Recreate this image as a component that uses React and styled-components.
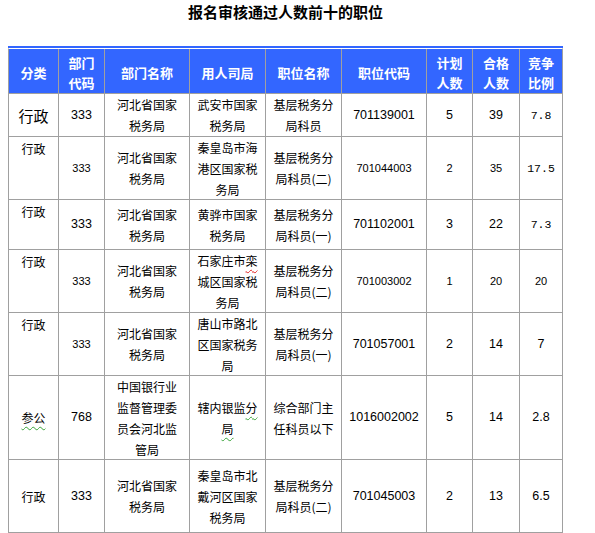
import React from "react";
import styled, { createGlobalStyle } from "styled-components";

const GlobalStyle = createGlobalStyle`
  body {
    margin: 0;
    background: #fff;
    font-family: "Noto Sans CJK SC", "Liberation Sans", sans-serif;
  }
`;

const headers = [
  ["分类"],
  ["部门", "代码"],
  ["部门名称"],
  ["用人司局"],
  ["职位名称"],
  ["职位代码"],
  ["计划", "人数"],
  ["合格", "人数"],
  ["竞争", "比例"],
];

const Wavy = styled.span`
  text-decoration: underline wavy ${(p) => p.$color};
  text-decoration-thickness: 1px;
  text-underline-offset: 3px;
`;

const TAX = ["河北省国家", "税务局"];

// each cell: [lines, kind, top]
const rows = [
  {
    h: 42,
    cells: [
      [["行政"], "cjkLg"],
      [["333"], "num"],
      [TAX, "cjk"],
      [["武安市国家", "税务局"], "cjk"],
      [["基层税务分", "局科员"], "cjk"],
      [["701139001"], "num"],
      [["5"], "num"],
      [["39"], "num"],
      [["7.8"], "mono"],
    ],
  },
  {
    h: 62,
    cells: [
      [["行政"], "cjk", true],
      [["333"], "sm"],
      [TAX, "cjk"],
      [["秦皇岛市海", "港区国家税", "务局"], "cjk"],
      [["基层税务分", "局科员(二)"], "cjk"],
      [["701044003"], "sm"],
      [["2"], "sm"],
      [["35"], "sm"],
      [["17.5"], "mono"],
    ],
  },
  {
    h: 49,
    cells: [
      [["行政"], "cjk", true],
      [["333"], "num"],
      [TAX, "cjk"],
      [["黄骅市国家", "税务局"], "cjk"],
      [["基层税务分", "局科员(一)"], "cjk"],
      [["701102001"], "num"],
      [["3"], "num"],
      [["22"], "num"],
      [["7.3"], "mono"],
    ],
  },
  {
    h: 62,
    cells: [
      [["行政"], "cjk", true],
      [["333"], "sm"],
      [TAX, "cjk"],
      [
        [
          <>
            石家庄市<Wavy $color="#e02020">栾</Wavy>
          </>,
          "城区国家税",
          "务局",
        ],
        "cjk",
      ],
      [["基层税务分", "局科员(二)"], "cjk"],
      [["701003002"], "sm"],
      [["1"], "sm"],
      [["20"], "sm"],
      [["20"], "sm"],
    ],
  },
  {
    h: 62,
    cells: [
      [["行政"], "cjk", true],
      [["333"], "sm"],
      [TAX, "cjk"],
      [["唐山市路北", "区国家税务", "局"], "cjk"],
      [["基层税务分", "局科员(一)"], "cjk"],
      [["701057001"], "num"],
      [["2"], "num"],
      [["14"], "num"],
      [["7"], "num"],
    ],
  },
  {
    h: 83,
    cells: [
      [[<Wavy $color="#3aa33a">参公</Wavy>], "cjk"],
      [["768"], "num"],
      [["中国银行业", "监督管理委", "员会河北监", "管局"], "cjk"],
      [
        [
          <>
            辖内银监<Wavy $color="#3aa33a">分</Wavy>
          </>,
          <Wavy $color="#3aa33a">局</Wavy>,
        ],
        "cjk",
      ],
      [["综合部门主", "任科员以下"], "cjk"],
      [["1016002002"], "num"],
      [["5"], "num"],
      [["14"], "num"],
      [["2.8"], "num"],
    ],
  },
  {
    h: 72,
    cells: [
      [["行政"], "cjk"],
      [["333"], "num"],
      [TAX, "cjk"],
      [["秦皇岛市北", "戴河区国家", "税务局"], "cjk"],
      [["基层税务分", "局科员(二)"], "cjk"],
      [["701045003"], "num"],
      [["2"], "num"],
      [["13"], "num"],
      [["6.5"], "num"],
    ],
  },
];

function App() {
  return (
    <Page>
      <GlobalStyle />
      <Title>报名审核通过人数前十的职位</Title>
      <TableWrap>
        <Grid $rows={rows.map((r) => r.h)}>
          {headers.map((lines, i) => (
            <HeadCell key={"h" + i}>
              {lines.map((l, j) => (
                <Line key={j}>{l}</Line>
              ))}
            </HeadCell>
          ))}
          {rows.map((row, r) =>
            row.cells.map(([lines, kind, top], c) => (
              <Cell key={r + "-" + c} $kind={kind} $top={top}>
                {lines.map((l, j) => (
                  <Line key={j}>{l}</Line>
                ))}
              </Cell>
            ))
          )}
        </Grid>
      </TableWrap>
    </Page>
  );
}

export default App;

const kinds = {
  cjk: `font-size: 12px; line-height: 21px; font-family: "Noto Sans CJK SC", sans-serif;`,
  cjkLg: `font-size: 15px; line-height: 21px; font-family: "Noto Sans CJK SC", sans-serif;`,
  num: `font-size: 12.5px; line-height: 21px; font-family: "Liberation Sans", Arial, sans-serif;`,
  sm: `font-size: 11px; line-height: 21px; font-family: "Liberation Sans", Arial, sans-serif;`,
  mono: `font-size: 11.5px; line-height: 21px; font-family: "Liberation Mono", monospace;`,
};

const Page = styled.div`
  width: 555px;
  margin-left: 8px;
`;

const Title = styled.h1`
  margin: 0;
  height: 46px;
  font-size: 15px;
  line-height: 24px;
  font-weight: 700;
  text-align: center;
  color: #000;
  font-family: "Noto Sans CJK SC", sans-serif;
`;

const TableWrap = styled.div`
  border-top: 2px solid #3366ff;
`;

const Grid = styled.div`
  display: grid;
  grid-template-columns: 49px 45px 84px 75px 75px 84px 45px 46px 42px;
  grid-template-rows: 44px ${(p) => p.$rows.map((h) => h + "px").join(" ")};
  gap: 1px;
  background: #a0a0a0;
  border: 1px solid #a0a0a0;
  border-top-color: #fff;
`;

const HeadCell = styled.div`
  display: flex;
  flex-direction: column;
  align-items: center;
  justify-content: center;
  padding-top: 4px;
  background: #3366ff;
  color: #fff;
  font-size: 13px;
  font-weight: 700;
  line-height: 20px;
  font-family: "Noto Sans CJK SC", sans-serif;
`;

const Cell = styled.div`
  display: flex;
  flex-direction: column;
  align-items: center;
  justify-content: ${(p) => (p.$top ? "flex-start" : "center")};
  padding-top: ${(p) => (p.$top ? "1px" : "0")};
  background: #fff;
  color: #000;
  text-align: center;
  white-space: nowrap;
  ${(p) => kinds[p.$kind]}
`;

const Line = styled.span`
  display: block;
`;
